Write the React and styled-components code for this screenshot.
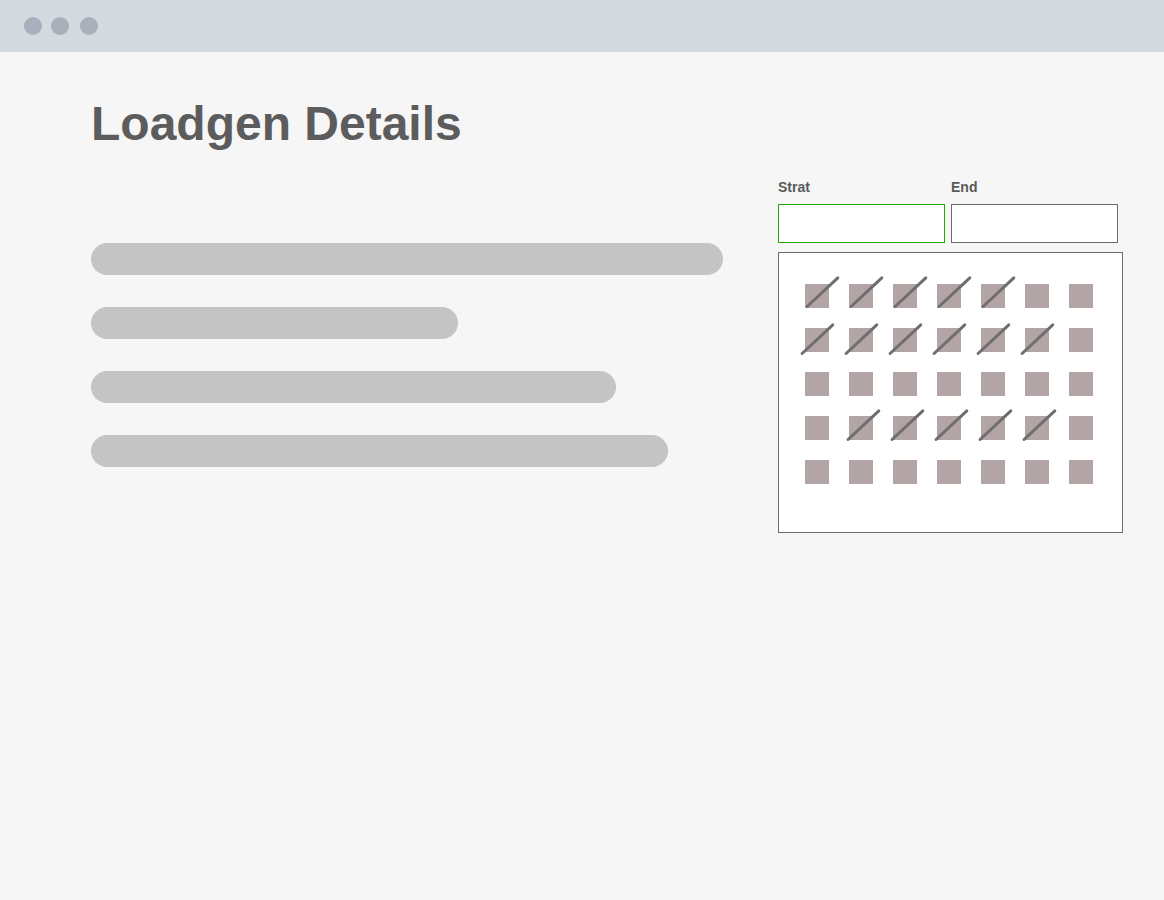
import styled, { createGlobalStyle } from "styled-components";

const GlobalStyle = createGlobalStyle`
  html, body {
    margin: 0;
    padding: 0;
    background: #f6f6f6;
    font-family: "Liberation Sans", Arial, sans-serif;
  }
`;

const bars = [632, 367, 525, 577];

// rows of the calendar: which cells are crossed out, and the line variant
const rows = [
  { crossed: [0, 1, 2, 3, 4], variant: "high" },
  { crossed: [0, 1, 2, 3, 4, 5], variant: "low" },
  { crossed: [], variant: "low" },
  { crossed: [1, 2, 3, 4, 5], variant: "mid" },
  { crossed: [], variant: "low" },
];

const App = () => {
  return (
    <Page>
      <GlobalStyle />
      <TopBar>
        <Dot />
        <Dot />
        <Dot />
      </TopBar>
      <Content>
        <Title>Loadgen Details</Title>
        <Columns>
          <Bars>
            {bars.map((w, i) => (
              <Bar key={i} style={{ width: w }} />
            ))}
          </Bars>
          <Panel>
            <Fields>
              <Field>
                <Label>Strat</Label>
                <Input $active />
              </Field>
              <Field>
                <Label>End</Label>
                <Input $active={false} />
              </Field>
            </Fields>
            <Calendar>
              {rows.map((row, r) =>
                Array.from({ length: 7 }).map((_, c) => (
                  <Day
                    key={`${r}-${c}`}
                    $crossed={row.crossed.includes(c)}
                    $variant={row.variant}
                  />
                ))
              )}
            </Calendar>
          </Panel>
        </Columns>
      </Content>
    </Page>
  );
};

const Page = styled.div`
  min-height: 900px;
  background: #f6f6f6;
`;

const TopBar = styled.header`
  height: 52px;
  background: #d5d9e0;
  display: flex;
  align-items: center;
  gap: 9px;
  padding-left: 24px;
`;

const Dot = styled.span`
  width: 18px;
  height: 18px;
  border-radius: 50%;
  background: #a9afbb;

  &:nth-child(3) {
    margin-left: 2px;
  }
`;

const Content = styled.main`
  padding: 0 41px 0 91px;
`;

const Title = styled.h1`
  margin: 0;
  padding-top: 45px;
  font-size: 48px;
  line-height: 54px;
  font-weight: 700;
  color: #5c5c5c;
`;

const Columns = styled.div`
  display: flex;
  align-items: flex-start;
  justify-content: space-between;
  margin-top: 28px;
`;

const Bars = styled.div`
  display: flex;
  flex-direction: column;
  gap: 32px;
  padding-top: 64px;
`;

const Bar = styled.div`
  height: 32px;
  border-radius: 16px;
  background: #c4c4c4;
`;

const Panel = styled.div`
  width: 345px;
`;

const Fields = styled.div`
  display: flex;
  gap: 6px;
`;

const Field = styled.div`
  display: flex;
  flex-direction: column;
`;

const Label = styled.label`
  font-size: 14px;
  font-weight: 700;
  color: #5a5a5a;
  line-height: 16px;
  margin-bottom: 9px;
`;

const Input = styled.div`
  box-sizing: border-box;
  width: 167px;
  height: 39px;
  background: #fff;
  border: 1px solid ${(p) => (p.$active ? "#22aa00" : "#6a6a6a")};
`;

const Calendar = styled.div`
  box-sizing: border-box;
  margin-top: 9px;
  height: 281px;
  background: #fff;
  border: 1px solid #6a6a6a;
  display: grid;
  grid-template-columns: repeat(7, 24px);
  grid-auto-rows: 24px;
  column-gap: 20px;
  row-gap: 20px;
  padding: 31px 0 0 26px;
  align-content: start;
`;

const offsets = {
  high: { left: 1, bottom: -1 },
  low: { left: -4, bottom: -4 },
  mid: { left: -2, bottom: -2 },
};

const Day = styled.div`
  position: relative;
  background: #b3a5a5;

  &::after {
    content: "";
    display: ${(p) => (p.$crossed ? "block" : "none")};
    position: absolute;
    left: ${(p) => offsets[p.$variant].left}px;
    bottom: ${(p) => offsets[p.$variant].bottom}px;
    width: 45px;
    height: 3px;
    border-radius: 2px;
    background: #6e6e6e;
    transform-origin: 0 50%;
    transform: rotate(-43deg);
  }
`;

export default App;
